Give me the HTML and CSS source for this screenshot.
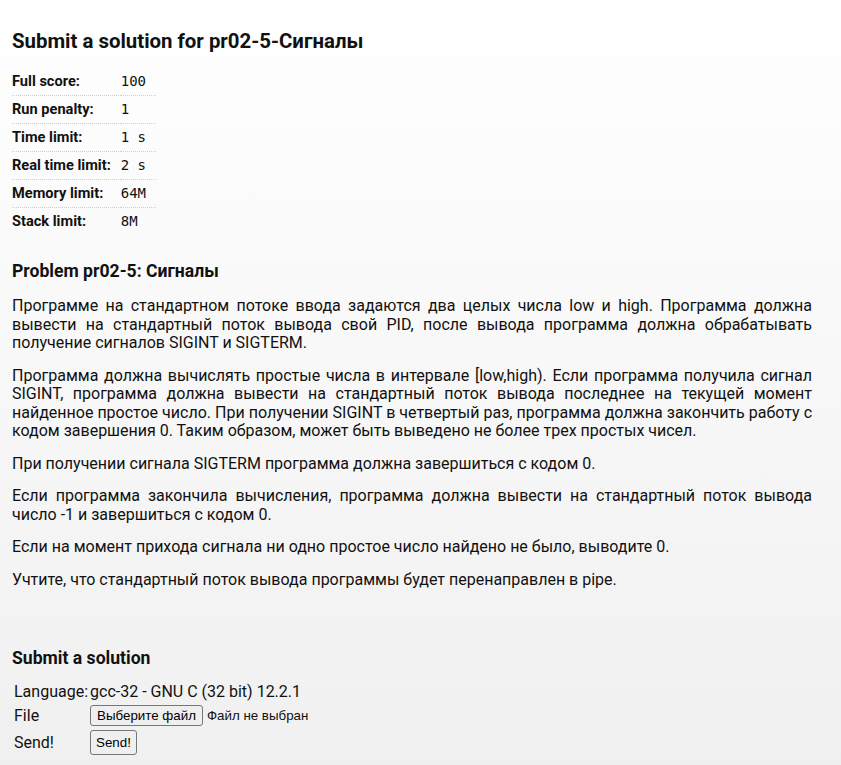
FILE: index.html
```html
<!DOCTYPE html>
<html lang="ru">
<head>
<meta charset="utf-8">
<title>Submit a solution for pr02-5-Сигналы</title>
<link rel="stylesheet" href="styles.css">
</head>
<body>
<div class="page">
  <h1 class="title">Submit a solution for pr02-5-Сигналы</h1>
  <table class="info">
    <tr><td class="lbl">Full score:</td><td class="val">100</td></tr>
    <tr><td class="lbl">Run penalty:</td><td class="val">1</td></tr>
    <tr><td class="lbl">Time limit:</td><td class="val">1 s</td></tr>
    <tr><td class="lbl">Real time limit:</td><td class="val">2 s</td></tr>
    <tr><td class="lbl">Memory limit:</td><td class="val">64M</td></tr>
    <tr><td class="lbl">Stack limit:</td><td class="val">8M</td></tr>
  </table>

  <h2 class="sub">Problem pr02-5: Сигналы</h2>
  <div class="statement">
    <p>Программе на стандартном потоке ввода задаются два целых числа low и high. Программа должна вывести на стандартный поток вывода свой PID, после вывода программа должна обрабатывать получение сигналов SIGINT и SIGTERM.</p>
    <p>Программа должна вычислять простые числа в интервале [low,high). Если программа получила сигнал SIGINT, программа должна вывести на стандартный поток вывода последнее на текущей момент найденное простое число. При получении SIGINT в четвертый раз, программа должна закончить работу с кодом завершения 0. Таким образом, может быть выведено не более трех простых чисел.</p>
    <p>При получении сигнала SIGTERM программа должна завершиться с кодом 0.</p>
    <p>Если программа закончила вычисления, программа должна вывести на стандартный поток вывода число -1 и завершиться с кодом 0.</p>
    <p>Если на момент прихода сигнала ни одно простое число найдено не было, выводите 0.</p>
    <p>Учтите, что стандартный поток вывода программы будет перенаправлен в pipe.</p>
  </div>

  <h2 class="sub sub-submit">Submit a solution</h2>
  <table class="form">
    <tr><td class="flbl">Language:</td><td>gcc-32 - GNU C (32 bit) 12.2.1</td></tr>
    <tr><td class="flbl">File</td><td><span class="file"><button class="btn" type="button">Выберите файл</button><span class="nofile">Файл не выбран</span></span></td></tr>
    <tr><td class="flbl">Send!</td><td><button class="btn btn-send" type="button">Send!</button></td></tr>
  </table>
</div>
</body>
</html>
```

FILE: styles.css
```css
html {
  background: #f0f0f0;
  min-height: 100%;
}
body {
  margin: 0;
  min-height: 722px;
  background: linear-gradient(#ffffff, #f0f0f0);
  font-family: Roboto, "Noto Sans", sans-serif;
  color: #111;
}
.page {
  padding: 30px 29px 8px 12px;
  max-width: 800px;
}
.title {
  font-size: 20.4px;
  font-weight: 700;
  margin: 0 0 15px 0;
  line-height: 23px;
}
.info {
  border-collapse: collapse;
  font-size: 14.6px;
}
.info tr + tr td {
  border-top: 1px dotted #d0d0d0;
}
.info td {
  padding: 5px 10px 5px 0;
  line-height: 17px;
}
.info .lbl {
  font-weight: 700;
}
.info .val {
  font-family: "DejaVu Sans Mono", monospace;
  font-size: 14px;
}
.sub {
  font-size: 17.6px;
  font-weight: 700;
  margin: 26px 0 15px 0;
  line-height: 21px;
}
.sub-submit {
  margin-top: 59px;
  margin-bottom: 10px;
}
.statement p {
  font-size: 16px;
  line-height: 18.5px;
  margin: 0 0 14px 0;
  text-align: justify;
}
.statement p:last-child {
  margin-bottom: 0;
}
.form {
  font-size: 16px;
  border-spacing: 2px;
}
.form td {
  padding: 1px 0;
}
.file {
  display: inline-flex;
  align-items: center;
  gap: 4px;
}
.btn {
  font-family: "Liberation Sans", Arial, sans-serif;
  font-size: 13.33px;
  background: #efefef;
  border: 1px solid #767676;
  border-radius: 3px;
  padding: 1px 6px;
  color: #000;
  height: 21px;
}
.btn-send {
  height: 25px;
  padding: 1px 5px;
}
.nofile {
  font-family: "Liberation Sans", Arial, sans-serif;
  font-size: 13.33px;
}
```
